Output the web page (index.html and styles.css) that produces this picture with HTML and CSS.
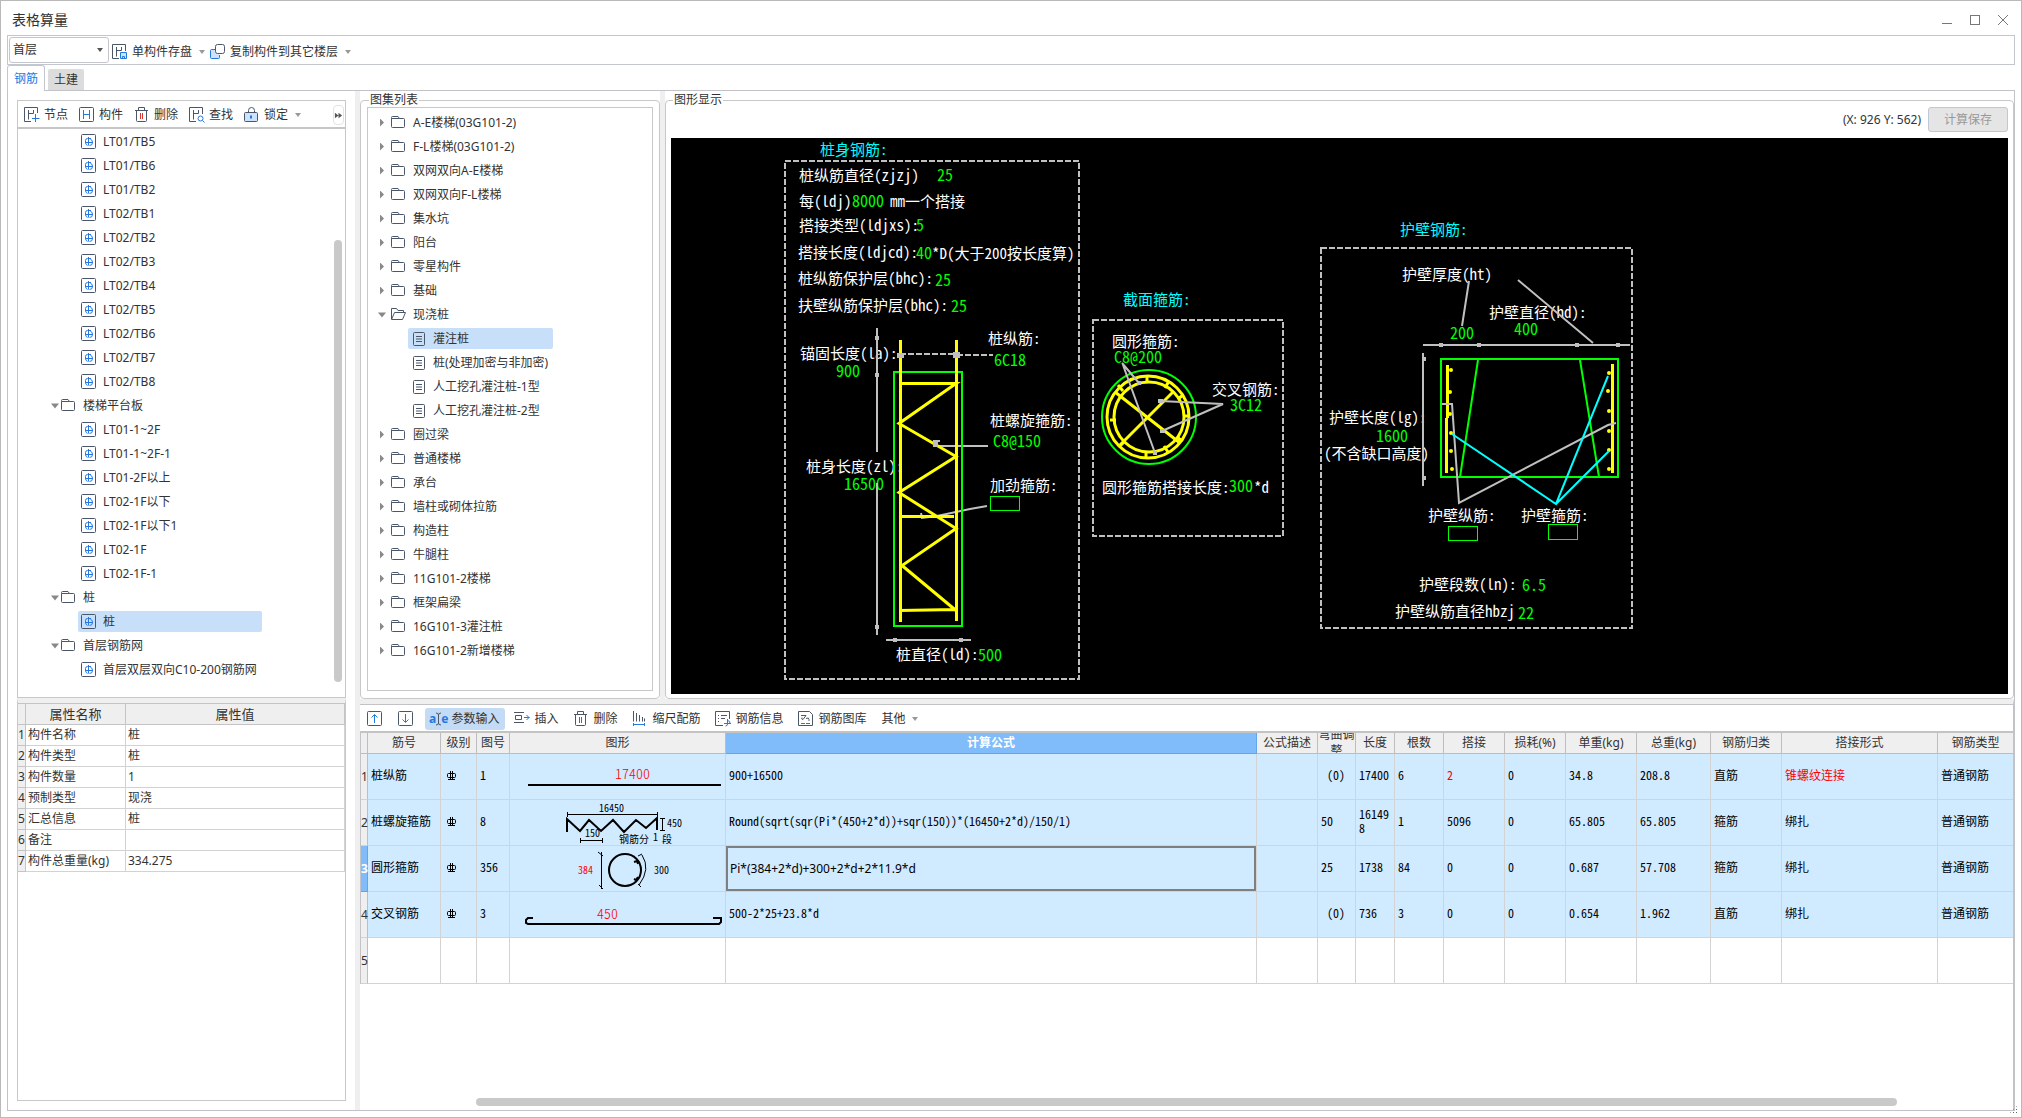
FILE: index.html
```
<!DOCTYPE html>
<html lang="zh-CN">
<head>
    <meta charset="UTF-8">
    <meta name="viewport" content="width=device-width, initial-scale=1">
    <title>表格算量</title>
    <link rel="stylesheet" href="styles.css">
</head>
<body>
    <!-- 图标 -->
    <svg class="sprite" aria-hidden="true">
        <symbol id="i-save" viewBox="0 0 16 16"><path class="k" d="M7 14.500H0.500v-14h13V7M4.500 3v9.500M4.500 6.500h5M9.500 3v3.500"/><path class="bf" d="M8.500 8.500h6v6h-6z"/><path class="b" d="M10.500 14.500v-2h2v2"/></symbol>
        <symbol id="i-copy" viewBox="0 0 16 16"><path class="bf" d="M5 5.500H1.500q-1 0-1 1v7q0 1 1 1h7q1 0 1-1V11"/><rect class="kw" x="5.500" y="0.500" width="9" height="9" rx="2"/></symbol>
        <symbol id="i-node" viewBox="0 0 16 16"><path class="k" d="M7 14.500H0.500v-14h13V6M4.500 3v9.500M4.500 6.500h5M9.500 3v3.500"/><path class="b" d="M11.500 7v8M8 11.500h7.500"/></symbol>
        <symbol id="i-part" viewBox="0 0 16 16"><rect class="k" x="0.500" y="0.500" width="14" height="14" rx="1"/><path class="b" d="M4.500 3v9M10.500 3v9M4.500 7.500h6"/></symbol>
        <symbol id="i-del" viewBox="0 0 16 16"><path class="k" d="M1 3.500h13M4.500 3V0.500h6V3M2.500 3.500v10q0 1 1 1h8q1 0 1-1v-10"/><path class="r" d="M6.500 6v6M8.500 6v6"/></symbol>
        <symbol id="i-find" viewBox="0 0 16 16"><path class="k" d="M7 14.500H0.500v-14h13V7M4.500 3v9.500M4.500 6.500h5M9.500 3v3.500"/><circle class="b" cx="11.500" cy="11.500" r="2.500"/><path class="b" d="M13.500 13.500l2 2"/></symbol>
        <symbol id="i-lock" viewBox="0 0 16 16"><path class="k" d="M4.500 6V3.500q0-3 3-3t3 3V6"/><rect class="kf" x="0.500" y="5.500" width="13" height="9" rx="1"/><path class="b2" d="M7 8.500v3"/></symbol>
        <symbol id="i-bar" viewBox="0 0 16 16"><rect class="k" x="0.500" y="0.500" width="14" height="14" rx="1"/><path class="b" d="M7.500 3v8.500M4 8.500h8M10 4.500H6.500q-2 0-2 2v2q0 2 2 3M9.500 5.500q2 0 2 3t-3 3"/></symbol>
        <symbol id="i-folder" viewBox="0 0 16 16"><path class="k" d="M0.500 3.500V11.500q0 1 1 1h11q1 0 1-1v-7q0-1-1-1H8.500L7 1.500H1.500q-1 0-1 1v1h8"/></symbol>
        <symbol id="i-open" viewBox="0 0 16 16"><path class="k" d="M0.500 12V1.500h5l1.500 2h5.500v2M0.500 12.500l3-7h11l-3 7z"/></symbol>
        <symbol id="i-doc" viewBox="0 0 16 16"><rect class="k" x="0.500" y="1.500" width="11" height="13" rx="1"/><path class="k" d="M3 5.500h6M3 8h6M3 10.500h6"/></symbol>
        <symbol id="i-up" viewBox="0 0 16 16"><rect class="k" x="0.500" y="0.500" width="14" height="14" rx="1"/><path class="b" d="M7.500 12V4M4.500 6.500l3-3 3 3"/></symbol>
        <symbol id="i-down" viewBox="0 0 16 16"><rect class="k" x="0.500" y="0.500" width="14" height="14" rx="1"/><path class="b" d="M7.500 3v8M4.500 8.500l3 3 3-3"/></symbol>
        <symbol id="i-insert" viewBox="0 0 16 16"><path class="k" d="M0 1.500h10M0 11.500h10M1.500 4.500h6v4h-6z"/><path class="b" d="M10 6.500h5.500M12.500 4l2.500 2.500-2.500 2.500"/></symbol>
        <symbol id="i-scale" viewBox="0 0 16 16"><path class="k" d="M1.500 0v10.500M4.500 2v8.500M7.500 4v6.500M10.500 6v4.500M12.500 7.500v3"/><path class="b" d="M1 13.500h12M1.500 12v3M12.500 12v3"/></symbol>
        <symbol id="i-info" viewBox="0 0 16 16"><path class="k" d="M8 14.500H0.500v-14h14V8M3 4.500h1M6 4.500h6M3 7.500h1M6 7.500h4M3 10.500h1"/><path class="b" d="M12.500 8v5q0 2-2 2M9 12.500h7M12.500 9.500q3 0 2.500 3.500"/></symbol>
        <symbol id="i-lib" viewBox="0 0 16 16"><path class="k" d="M0.500 0.500h11l3 3v11h-14zM3 4.500h5l-3 4q-2 0-1-2M8 7.500q3-1.500 3 1v1.500"/><path class="b" d="M3 12.500h4M8 12.500h4"/></symbol>
        <symbol id="i-grade" viewBox="0 0 11 11"><rect x="1.500" y="2.500" width="8" height="4" rx="1" fill="none" stroke="#000"/><path d="M4.500 0v9M6.500 0v9M2 8.500h7" fill="none" stroke="#000"/></symbol>
    </svg>

    <div class="window">
        <header class="titlebar">
            <h1>表格算量</h1>
            <div class="win-buttons">
                <button aria-label="最小化"><svg viewBox="0 0 12 12"><path d="M1 9.500h10"/></svg></button>
                <button aria-label="最大化"><svg viewBox="0 0 12 12"><rect x="1.500" y="1.500" width="9" height="9"/></svg></button>
                <button aria-label="关闭"><svg viewBox="0 0 12 12"><path d="M1 1l10 10M11 1L1 11"/></svg></button>
            </div>
        </header>

        <div class="topbar">
            <div class="combo">
                <select aria-label="楼层"><option>首层</option></select>
            </div>
            <button class="tool"><svg><use href="#i-save"/></svg>单构件存盘<i class="drop"></i></button>
            <button class="tool"><svg><use href="#i-copy"/></svg>复制构件到其它楼层<i class="drop"></i></button>
        </div>

        <nav class="tabs">
            <button class="tab active">钢筋</button>
            <button class="tab">土建</button>
        </nav>

        <main class="content">
            <aside class="side">
                <section class="parts">
                    <div class="parts-bar">
                        <button class="tool"><svg><use href="#i-node"/></svg>节点</button>
                        <button class="tool"><svg><use href="#i-part"/></svg>构件</button>
                        <button class="tool"><svg><use href="#i-del"/></svg>删除</button>
                        <button class="tool"><svg><use href="#i-find"/></svg>查找</button>
                        <button class="tool"><svg><use href="#i-lock"/></svg>锁定<i class="drop"></i></button>
                        <button class="more" aria-label="更多"><svg viewBox="0 0 10 10"><path d="M1 2l4 3-4 3zM5 2l4 3-4 3z"/></svg></button>
                    </div>
                    <ul class="tree part-tree" id="part-tree"></ul>
                    <div class="vscroll"></div>
                </section>
                <section class="props">
                    <table class="prop-table">
                        <colgroup><col class="w-no"><col class="w-name"><col></colgroup>
                        <thead><tr><th></th><th>属性名称</th><th>属性值</th></tr></thead>
                        <tbody>
                            <tr><th>1</th><td>构件名称</td><td>桩</td></tr>
                            <tr><th>2</th><td>构件类型</td><td>桩</td></tr>
                            <tr><th>3</th><td>构件数量</td><td>1</td></tr>
                            <tr><th>4</th><td>预制类型</td><td>现浇</td></tr>
                            <tr><th>5</th><td>汇总信息</td><td>桩</td></tr>
                            <tr><th>6</th><td>备注</td><td></td></tr>
                            <tr><th>7</th><td>构件总重量(kg)</td><td>334.275</td></tr>
                        </tbody>
                    </table>
                </section>
            </aside>
            <div class="splitter"></div>

            <div class="work">
                <div class="upper">
                    <fieldset class="group atlas">
                        <legend>图集列表</legend>
                        <div class="atlas-box"><ul class="tree atlas-tree" id="atlas-tree"></ul></div>
                    </fieldset>
                    <div class="splitter"></div>
                    <fieldset class="group figure">
                        <legend>图形显示</legend>
                        <div class="figure-bar">
                            <span>(X: 926 Y: 562)</span>
                            <button class="calc" disabled>计算保存</button>
                        </div>
                        <div class="canvas">
                            <svg class="drawing" width="1000" height="555" viewBox="0 0 1000 555">
                                <g class="frame">
                                    <rect x="114" y="23" width="294" height="518"/>
                                    <rect x="422" y="182" width="190" height="216"/>
                                    <rect x="650" y="110" width="311" height="380"/>
                                </g>

                                <!-- 桩身钢筋 -->
                                <text class="cyan" x="149" y="17">桩身钢筋:</text>
                                <text x="128" y="43">桩纵筋直径(zjzj)</text><text class="val" x="266" y="43">25</text>
                                <text x="128" y="69">每(ldj)</text><text class="val" x="181" y="69">8000</text><text x="219" y="69">mm一个搭接</text>
                                <text x="128" y="93">搭接类型(ldjxs):</text><text class="val" x="245" y="93">5</text>
                                <text x="127" y="120">搭接长度(ldjcd):</text><text class="val" x="245" y="121">40</text><text x="261" y="121">*D(大于200按长度算)</text>
                                <text x="127" y="146">桩纵筋保护层(bhc):</text><text class="val" x="264" y="148">25</text>
                                <text x="127" y="173">扶壁纵筋保护层(bhc):</text><text class="val" x="280" y="174">25</text>
                                <text x="129" y="221">锚固长度(la):</text><text class="val" x="165" y="239">900</text>
                                <text x="135" y="334">桩身长度(zl):</text><text class="val" x="173" y="352">16500</text>
                                <text x="317" y="206">桩纵筋:</text><text class="val" x="323" y="228">6C18</text>
                                <text x="319" y="288">桩螺旋箍筋:</text><text class="val" x="322" y="309">C8@150</text>
                                <text x="319" y="353">加劲箍筋:</text>
                                <text x="225" y="522">桩直径(ld):</text><text class="val" x="307" y="523">500</text>
                                <g class="gray">
                                    <path d="M206 190v124M206 345v152M215 502h85"/>
                                    <path d="M264 308h53M262 303h7M264 303v5M250 375l1 5 15-2 33-7 17-3"/>
                                    <path class="dash" d="M229 216h56M286 217h36"/>
                                </g>
                                <g class="green">
                                    <rect x="223" y="234" width="68" height="254"/>
                                    <rect class="thin" x="319.500" y="358.500" width="29" height="14"/>
                                </g>
                                <path class="yellow" d="M229.500 202v282M285.500 202v281M230 245.500h55l-57 40 57 33-57 36 57 36-54 37 54 45M228 472.500l57-1M231 378.500h52"/>
                                <path class="dots" d="M204 198h4v4h-4zM204 235h4v4h-4zM204 487h4v4h-4zM222 500h4v4h-4zM288 500h4v4h-4zM226 215h7v5h-7zM282 214h7v6h-7zM262 304h5v5h-5z"/>

                                <!-- 截面箍筋 -->
                                <text class="cyan" x="452" y="167">截面箍筋:</text>
                                <text x="441" y="209">圆形箍筋:</text><text class="val" x="443" y="225">C8@200</text>
                                <text x="541" y="257">交叉钢筋:</text><text class="val" x="559" y="273">3C12</text>
                                <text x="431" y="355">圆形箍筋搭接长度:</text><text class="val" x="558" y="354">300</text><text x="583" y="355">*d</text>
                                <g class="green"><circle cx="478" cy="279" r="47"/></g>
                                <g class="yellow">
                                    <circle cx="477" cy="279" r="41"/><circle cx="478" cy="279" r="35"/>
                                    <path d="M444 254l65 51M502 254l-53 53"/>
                                    <path d="M476 238v7M498 243l-4 7M512 257l-5 4M518 278h-6M511 303l-5-4M497 314l-4-6M475 320v-7M448 309l5-5M439 282h6M447 247l5 6"/>
                                </g>
                                <path class="gray" d="M451 225l17 20M452 227l32 88M489 263l63 3-61 27"/>
                                <path class="dots" d="M466 243h4v4h-4zM482 313h4v4h-4zM487 261h5v4h-5zM489 291h5v4h-5z"/>

                                <!-- 护壁钢筋 -->
                                <text class="cyan" x="729" y="97">护壁钢筋:</text>
                                <text x="731" y="142">护壁厚度(ht)</text><text class="val" x="779" y="201">200</text>
                                <text x="818" y="180">护壁直径(hd):</text><text class="val" x="843" y="197">400</text>
                                <text x="658" y="285">护壁长度(lg):</text><text class="val" x="705" y="304">1600</text>
                                <text x="653" y="321">(不含缺口高度)</text>
                                <text x="757" y="383">护壁纵筋:</text><text x="850" y="383">护壁箍筋:</text>
                                <text x="748" y="452">护壁段数(ln):</text><text class="val" x="851" y="453">6.5</text>
                                <text x="724" y="479">护壁纵筋直径hbzj</text><text class="val" x="847" y="481">22</text>
                                <g class="green">
                                    <rect x="770" y="221" width="177" height="118"/>
                                    <path d="M807 222l-18 117M909 222l19 117"/>
                                    <rect class="thin" x="777.500" y="388.500" width="29" height="14"/>
                                    <rect class="thin" x="877.500" y="386.500" width="29" height="15"/>
                                </g>
                                <path class="yellow" d="M776.500 227v53M775.500 280v55M941.500 226v109"/>
                                <g class="balls">
                                    <circle cx="780" cy="232" r="2"/><circle cx="779" cy="254" r="2"/><circle cx="779" cy="276" r="2"/><circle cx="780" cy="295" r="2"/><circle cx="780" cy="313" r="2"/><circle cx="781" cy="331" r="2"/>
                                    <circle cx="938" cy="235" r="2"/><circle cx="937" cy="253" r="2"/><circle cx="938" cy="273" r="2"/><circle cx="938" cy="293" r="2"/><circle cx="938" cy="312" r="2"/><circle cx="938" cy="331" r="2"/>
                                </g>
                                <path class="gray" d="M752 207h207M752 215v133M798 143l-7 45M847 142l75 63M771 266h10l7 99 149-78 8-2"/>
                                <path class="dots" d="M768 205h4v4h-4zM806 205h4v4h-4zM904 205h4v4h-4zM945 205h4v4h-4zM752 219h3v4h-3zM752 338h3v4h-3z"/>
                                <path class="aqua" d="M781 296l104 70 52-128M885 366l53-53"/>
                            </svg>
                        </div>
                    </fieldset>
                </div>

                <section class="bars">
                    <div class="bars-bar">
                        <button class="tool" aria-label="上移"><svg><use href="#i-up"/></svg></button>
                        <button class="tool" aria-label="下移"><svg><use href="#i-down"/></svg></button>
                        <button class="tool on"><b class="ae">a<svg viewBox="0 0 5 14"><path class="k" d="M0 1q2.500 0 2.500 2v8q0 2-2.500 2M5 1q-2.500 0-2.500 2v8q0 2 2.500 2"/></svg>e</b>参数输入</button>
                        <button class="tool"><svg><use href="#i-insert"/></svg>插入</button>
                        <button class="tool"><svg><use href="#i-del"/></svg>删除</button>
                        <button class="tool"><svg><use href="#i-scale"/></svg>缩尺配筋</button>
                        <button class="tool"><svg><use href="#i-info"/></svg>钢筋信息</button>
                        <button class="tool"><svg><use href="#i-lib"/></svg>钢筋图库</button>
                        <button class="tool">其他<i class="drop"></i></button>
                    </div>
                    <table class="grid">
                        <colgroup>
                            <col style="width:7px"><col style="width:73px"><col style="width:36px"><col style="width:33px"><col style="width:216px"><col>
                            <col style="width:61px"><col style="width:38px"><col style="width:39px"><col style="width:49px"><col style="width:61px"><col style="width:61px">
                            <col style="width:71px"><col style="width:74px"><col style="width:71px"><col style="width:156px"><col style="width:75px">
                        </colgroup>
                        <thead>
                            <tr><th></th><th>筋号</th><th>级别</th><th>图号</th><th>图形</th><th class="cur">计算公式</th><th>公式描述</th><th><div class="clip">弯曲调整</div></th><th>长度</th><th>根数</th><th>搭接</th><th>损耗(%)</th><th>单重(kg)</th><th>总重(kg)</th><th>钢筋归类</th><th>搭接形式</th><th class="last">钢筋类型</th></tr>
                        </thead>
                        <tbody>
                            <tr class="fill">
                                <th>1</th><td>桩纵筋</td><td><svg class="grade"><use href="#i-grade"/></svg></td><td>1</td>
                                <td class="shape"><svg viewBox="0 0 215 45"><path class="s2" d="M18 31h193"/><text class="big" x="105" y="25">17400</text></svg></td>
                                <td>900+16500</td><td></td><td>&nbsp;(0)</td><td>17400</td><td>6</td><td class="red">2</td><td>0</td><td>34.8</td><td>208.8</td><td>直筋</td><td class="red">锥螺纹连接</td><td class="last">普通钢筋</td>
                            </tr>
                            <tr class="fill">
                                <th>2</th><td>桩螺旋箍筋</td><td><svg class="grade"><use href="#i-grade"/></svg></td><td>8</td>
                                <td class="shape"><svg viewBox="0 0 215 45">
                                    <path class="s2" d="M57 32V19l13 12 9-11 12 11 12-11 11 12 12-12 10 8 11-10v12"/>
                                    <path class="s1" d="M57 14.500h90M57.500 12v5M147.500 12v5M150 18.500h5M150 30.500h5M152.500 19v12M70 40.500h22M70.500 38v5M92.500 38v5"/>
                                    <text x="89" y="12">16450</text><text x="157" y="27">450</text><text x="75" y="37">150</text><text x="109" y="43">钢筋分</text><text x="143" y="41">1</text><text x="152" y="43">段</text>
                                </svg></td>
                                <td>Round(sqrt(sqr(Pi*(450+2*d))+sqr(150))*(16450+2*d)/150/1)</td><td></td><td>50</td><td>161498</td><td>1</td><td>5096</td><td>0</td><td>65.805</td><td>65.805</td><td>箍筋</td><td>绑扎</td><td class="last">普通钢筋</td>
                            </tr>
                            <tr class="fill">
                                <th class="cur">3</th><td>圆形箍筋</td><td><svg class="grade"><use href="#i-grade"/></svg></td><td>356</td>
                                <td class="shape"><svg viewBox="0 0 215 45">
                                    <circle class="s2" cx="115" cy="24" r="16"/>
                                    <path class="s2" d="M124 16l3-1 1 3M124 33l2 1 2-3"/>
                                    <path class="s1" d="M91.500 6v37M88 6l5 4M89 39l4 4M128 10l4-2M132 9q9 14-3 30M131 41l-3-3"/>
                                    <text class="red" x="68" y="28">384</text><text x="144" y="28">300</text>
                                </svg></td>
                                <td class="edit"><input type="text" aria-label="计算公式" value="Pi*(384+2*d)+300+2*d+2*11.9*d"></td><td></td><td>25</td><td>1738</td><td>84</td><td>0</td><td>0</td><td>0.687</td><td>57.708</td><td>箍筋</td><td>绑扎</td><td class="last">普通钢筋</td>
                            </tr>
                            <tr class="fill">
                                <th>4</th><td>交叉钢筋</td><td><svg class="grade"><use href="#i-grade"/></svg></td><td>3</td>
                                <td class="shape"><svg viewBox="0 0 215 45"><path class="s2" d="M23 26h-5l-2 2v3l2 1h191l2-2v-4h-8"/><text class="big" x="87" y="27">450</text></svg></td>
                                <td>500-2*25+23.8*d</td><td></td><td>&nbsp;(0)</td><td>736</td><td>3</td><td>0</td><td>0</td><td>0.654</td><td>1.962</td><td>直筋</td><td>绑扎</td><td class="last">普通钢筋</td>
                            </tr>
                            <tr><th>5</th><td></td><td></td><td></td><td></td><td></td><td></td><td></td><td></td><td></td><td></td><td></td><td></td><td></td><td></td><td></td><td class="last"></td></tr>
                        </tbody>
                    </table>
                    <div class="hscroll"></div>
                </section>
            </div>
        </main>
        <div class="grip"></div>
    </div>

    <script>
        // type: f = 文件夹, o = 打开的文件夹, l = 叶子节点
        const parts = [
            ["l", "LT01/TB5"], ["l", "LT01/TB6"], ["l", "LT01/TB2"],
            ["l", "LT02/TB1"], ["l", "LT02/TB2"], ["l", "LT02/TB3"], ["l", "LT02/TB4"],
            ["l", "LT02/TB5"], ["l", "LT02/TB6"], ["l", "LT02/TB7"], ["l", "LT02/TB8"],
            ["f", "楼梯平台板"],
            ["l", "LT01-1~2F"], ["l", "LT01-1~2F-1"], ["l", "LT01-2F以上"], ["l", "LT02-1F以下"],
            ["l", "LT02-1F以下1"], ["l", "LT02-1F"], ["l", "LT02-1F-1"],
            ["f", "桩"], ["l", "桩", true],
            ["f", "首层钢筋网"], ["l", "首层双层双向C10-200钢筋网"]
        ];

        const atlas = [
            ["f", "A-E楼梯(03G101-2)"], ["f", "F-L楼梯(03G101-2)"],
            ["f", "双网双向A-E楼梯"], ["f", "双网双向F-L楼梯"],
            ["f", "集水坑"], ["f", "阳台"], ["f", "零星构件"], ["f", "基础"],
            ["o", "现浇桩"],
            ["l", "灌注桩", true], ["l", "桩(处理加密与非加密)"], ["l", "人工挖孔灌注桩-1型"], ["l", "人工挖孔灌注桩-2型"],
            ["f", "圈过梁"], ["f", "普通楼梯"], ["f", "承台"], ["f", "墙柱或砌体拉筋"],
            ["f", "构造柱"], ["f", "牛腿柱"], ["f", "11G101-2楼梯"], ["f", "框架扁梁"],
            ["f", "16G101-3灌注桩"], ["f", "16G101-2新增楼梯"]
        ];

        function renderTree(id, items, leafIcon, allOpen) {
            document.getElementById(id).innerHTML = items.map(([type, label, selected]) => {
                if (type === "l") {
                    return `<li class="leaf${selected ? " selected" : ""}"><svg><use href="#${leafIcon}"/></svg>${label}</li>`;
                }
                const open = allOpen || type === "o";
                const icon = type === "o" ? "i-open" : "i-folder";
                return `<li class="folder"><i class="arrow${open ? " open" : ""}"></i><svg><use href="#${icon}"/></svg>${label}</li>`;
            }).join("");
        }

        renderTree("part-tree", parts, "i-bar", true);
        renderTree("atlas-tree", atlas, "i-doc", false);
    </script>
</body>
</html>
```
FILE: styles.css
```
* {
    box-sizing: border-box;
}

body {
    margin: 0;
    font: 12px/16px "Noto Sans", "Noto Sans CJK SC", sans-serif;
    color: #333;
    background: #fff;
}

ul {
    list-style: none;
    margin: 0;
    padding: 0;
}

button, input, select {
    font: inherit;
    color: inherit;
}

button {
    background: none;
    border: none;
    padding: 0;
}

table {
    width: 100%;
    table-layout: fixed;
    border-collapse: separate;
    border-spacing: 0;
}

th, td {
    padding: 0;
    font-weight: normal;
}

/* 图标线条 */
.sprite {
    position: absolute;
    width: 0;
    height: 0;
}

.k, .kw, .kf, .b, .bf, .b2, .r {
    fill: none;
    stroke: #4b5668;
}

.kw {
    fill: #fff;
}

.kf {
    fill: #cfe2fc;
}

.b, .bf, .b2 {
    stroke: #2479e0;
}

.bf {
    fill: #cfe2fc;
}

.b2 {
    stroke-width: 2;
}

.r {
    stroke: #d9362f;
}

/* 窗口 */
.window {
    position: relative;
    display: flex;
    flex-direction: column;
    height: 100vh;
    border: 1px solid #b9b9b9;
    padding: 0 6px 6px;
}

.titlebar {
    display: flex;
    align-items: center;
    justify-content: space-between;
    height: 34px;
    padding: 0 1px 0 5px;
}

.titlebar h1 {
    margin: 4px 0 0;
    font-size: 14px;
    line-height: 20px;
    font-weight: normal;
}

.win-buttons {
    display: flex;
    gap: 16px;
    padding: 4px 5px 0 0;
}

.win-buttons button {
    display: flex;
}

.win-buttons svg {
    width: 12px;
    height: 12px;
    fill: none;
    stroke: #777;
}

.topbar {
    display: flex;
    align-items: center;
    gap: 5px;
    height: 30px;
    border: 1px solid #c3c7cd;
    padding: 0 1px;
}

.topbar .tool {
    padding-top: 3px;
}

.combo {
    position: relative;
    width: 100px;
    height: 26px;
    margin-right: -2px;
}

.combo select {
    width: 100%;
    height: 100%;
    padding: 0 3px;
    appearance: none;
    background: #fff;
    border: 1px solid #c3c7cd;
    border-radius: 3px;
}

.combo::after {
    content: "";
    position: absolute;
    right: 6px;
    top: 11px;
    border: 3px solid transparent;
    border-top: 4px solid #555;
    border-bottom: none;
}

.tool {
    display: flex;
    align-items: center;
    gap: 4px;
    white-space: nowrap;
}

.tool > svg {
    width: 16px;
    height: 16px;
}

.drop {
    margin-left: 3px;
    border: 3px solid transparent;
    border-top: 4px solid #999;
    border-bottom: none;
}

.tabs {
    display: flex;
    align-items: flex-end;
    gap: 3px;
    height: 26px;
    margin-bottom: -1px;
    z-index: 1;
}

.tab {
    width: 36px;
    height: 21px;
    margin-bottom: 1px;
    background: #dcdcdc;
    border-radius: 2px 2px 0 0;
}

.tab.active {
    width: 38px;
    height: 26px;
    margin: 0;
    color: #2479e0;
    background: #fff;
    border: 1px solid #c3c7cd;
    border-bottom: none;
    border-radius: 3px 3px 0 0;
}

.content {
    display: flex;
    flex: 1;
    min-height: 0;
    border: 1px solid #c3c3c7;
}

.splitter {
    width: 5px;
    background: #efefef;
}

/* 左侧构件树与属性 */
.side {
    display: flex;
    flex-direction: column;
    width: 347px;
    padding: 9px;
}

.parts {
    position: relative;
    flex: 1;
    min-height: 0;
    border: 1px solid #c8c8c8;
    overflow: hidden;
}

.parts-bar {
    display: flex;
    align-items: center;
    gap: 11px;
    height: 28px;
    padding: 2px 0 0 6px;
    border-bottom: 2px solid #c6c6c8;
}

.more {
    display: flex;
    align-items: center;
    justify-content: center;
    width: 11px;
    height: 20px;
    margin: 0 1px 0 auto;
    border: 1px solid #e3e3e3;
    border-radius: 4px;
}

.more svg {
    flex: none;
    width: 9px;
    height: 9px;
    fill: #555;
}

.tree {
    width: max-content;
}

.tree li {
    display: flex;
    align-items: center;
    gap: 6px;
    height: 21px;
    margin: 0 0 3px;
    padding-right: 5px;
    white-space: nowrap;
}

.tree svg {
    width: 16px;
    height: 16px;
}

.tree .selected {
    background: #c8dff9;
    border-radius: 2px;
}

.part-tree {
    padding-top: 2px;
}

.part-tree .leaf {
    margin-left: 60px;
    padding-left: 3px;
}

.part-tree .folder {
    margin-left: 33px;
}

.arrow {
    width: 8px;
    height: 8px;
    margin-right: -4px;
    background: #888;
    clip-path: polygon(2px 0, 6px 4px, 2px 8px);
}

.arrow.open {
    clip-path: polygon(0 2px, 8px 2px, 4px 7px);
}

.vscroll {
    position: absolute;
    top: 139px;
    bottom: 15px;
    right: 3px;
    width: 8px;
    border-radius: 4px;
    background: #c9c9c9;
}

.props {
    height: 403px;
    border: 1px solid #c8c8c8;
    border-top: 5px solid #efefef;
}

.w-no {
    width: 8px;
}

.w-name {
    width: 100px;
}

.prop-table th, .prop-table td {
    height: 21px;
    border-right: 1px solid #d2d2d2;
    border-bottom: 1px solid #d2d2d2;
}

.prop-table td {
    padding-left: 2px;
}

.prop-table th {
    background: #efefef;
    border-color: #c4c4c4;
    white-space: nowrap;
}

.prop-table thead th {
    height: 22px;
    font-size: 13px;
    border-top: 1px solid #c4c4c4;
}

/* 图集与图形 */
.work {
    display: flex;
    flex-direction: column;
    flex: 1;
    min-width: 0;
    background: #fff;
}

.upper {
    display: flex;
    flex: 1;
    min-height: 0;
}

.group {
    display: flex;
    flex-direction: column;
    min-width: 0;
    margin: 2px 0 0;
    padding: 0 6px 7px;
    border: 1px solid #c8c8c8;
    border-radius: 4px;
}

.group legend {
    margin-left: 2px;
    padding: 0 1px;
    line-height: 14px;
}

.atlas {
    width: 300px;
}

.atlas-box {
    flex: 1;
    border: 1px solid #c8c8c8;
    overflow: hidden;
}

.atlas-tree {
    padding-top: 4px;
}

.atlas-tree .folder {
    margin-left: 10px;
}

.atlas-tree .arrow {
    margin-right: -1px;
}

.atlas-tree .leaf {
    gap: 4px;
    margin-left: 40px;
    padding-left: 5px;
}

.figure {
    flex: 1;
    padding: 0 5px 4px;
}

.figure-bar {
    display: flex;
    justify-content: flex-end;
    align-items: center;
    gap: 7px;
    height: 31px;
    padding-bottom: 6px;
}

.calc {
    width: 80px;
    height: 25px;
    color: #999;
    background: #e5e5e5;
    border: 1px solid #bfc8d6;
    border-radius: 3px;
}

.canvas {
    flex: 1;
    min-height: 0;
    background: #000;
    overflow: hidden;
}

.drawing {
    display: block;
}

/* 半角西文, 与汉字按 1:2 对齐 */
.drawing text, .grid {
    font-family: "Noto Sans CJK SC", sans-serif;
    font-feature-settings: "hwid" 1;
}

.drawing text {
    font-size: 15px;
    fill: #fff;
}

.drawing .val {
    font-size: 16px;
    fill: #0f0;
}

.drawing .cyan {
    fill: #0ff;
}

.drawing .frame, .drawing .dash {
    fill: none;
    stroke: #c0c0c0;
    stroke-width: 2;
    stroke-dasharray: 6 2;
}

.drawing .green, .drawing .gray, .drawing .yellow, .drawing .aqua {
    fill: none;
    stroke-width: 2;
}

.drawing .green {
    stroke: #0f0;
}

.drawing .green .thin {
    stroke-width: 1;
}

.drawing .gray {
    stroke: #c0c0c0;
}

.drawing .yellow {
    stroke: #ff0;
    stroke-width: 3;
}

.drawing .aqua {
    stroke: #0ff;
}

.drawing .dots {
    fill: #c0c0c0;
}

.drawing .balls {
    fill: #ff0;
}

/* 钢筋表 */
.bars {
    position: relative;
    height: 411px;
    border-top: 5px solid #efefef;
    border-right: 1px solid #c3c3c7;
    overflow: hidden;
}

.bars-bar {
    display: flex;
    align-items: center;
    gap: 15px;
    height: 29px;
    padding: 1px 0 0 7px;
    border-top: 1px solid #c3c3c7;
    border-bottom: 2px solid #c3c3c3;
}

.tool.on {
    gap: 3px;
    height: 22px;
    margin: 0 -6px 0 -4px;
    padding: 0 6px 0 4px;
    background: #c3dbf5;
    border-radius: 3px;
}

.ae {
    display: flex;
    align-items: center;
    color: #2479e0;
}

.ae svg {
    width: 5px;
    height: 14px;
}

.grid {
    color: #000;
    border-left: 1px solid #c3c3c7;
}

.grid th, .grid td {
    border-right: 1px solid #d3d3d3;
    border-bottom: 1px solid #d3d3d3;
}

.grid th {
    font-family: "Noto Sans", "Noto Sans CJK SC", sans-serif;
    font-feature-settings: normal;
    color: #333;
    background: #efefef;
    white-space: nowrap;
}

.grid thead th {
    height: 21px;
    border-color: #bdbdbd;
}

.grid tbody th {
    border-right-color: #bdbdbd;
}

.grid .clip {
    display: flex;
    align-items: center;
    height: 20px;
    text-align: center;
    white-space: normal;
    overflow: hidden;
}

.grid td {
    height: 46px;
    padding: 0 2px 4px 3px;
    line-height: 14px;
    word-break: break-all;
}

.grid .fill td {
    background: #d0eaff;
}

.grid th.cur {
    color: #fff;
    font-weight: bold;
    background: #80bbfa;
    border-color: #62a5ec;
}

.grid .last {
    border-right: none;
}

.grid td.red {
    color: #f00;
}

.grid .grade {
    display: block;
    width: 11px;
    height: 11px;
    margin: 4px 0 0 2px;
}

.grid .shape, .grid .edit {
    padding: 0;
}

.shape svg {
    display: block;
    width: 215px;
    height: 45px;
}

.shape text {
    font-size: 10px;
}

.shape .red {
    fill: #f00;
}

.shape .big {
    font-size: 14px;
    font-weight: 300;
    fill: #f00;
}

.s1, .s2 {
    fill: none;
    stroke: #000;
}

.s2 {
    stroke-width: 2;
}

.edit input {
    display: block;
    width: 100%;
    height: 45px;
    padding: 0 2px;
    font-family: "Noto Sans", "Noto Sans CJK SC", sans-serif;
    font-feature-settings: normal;
    background: none;
    border: 2px solid #7f7f7f;
}

.hscroll {
    position: absolute;
    left: 7%;
    right: 7%;
    bottom: 4px;
    height: 8px;
    border-radius: 4px;
    background: #c9c9c9;
}

.grip {
    position: absolute;
    right: 3px;
    bottom: 3px;
    width: 9px;
    height: 9px;
    background: radial-gradient(circle, #666 1px, transparent 1px) 0 0 / 3px 3px;
    clip-path: polygon(100% 0, 100% 100%, 0 100%);
}
```
